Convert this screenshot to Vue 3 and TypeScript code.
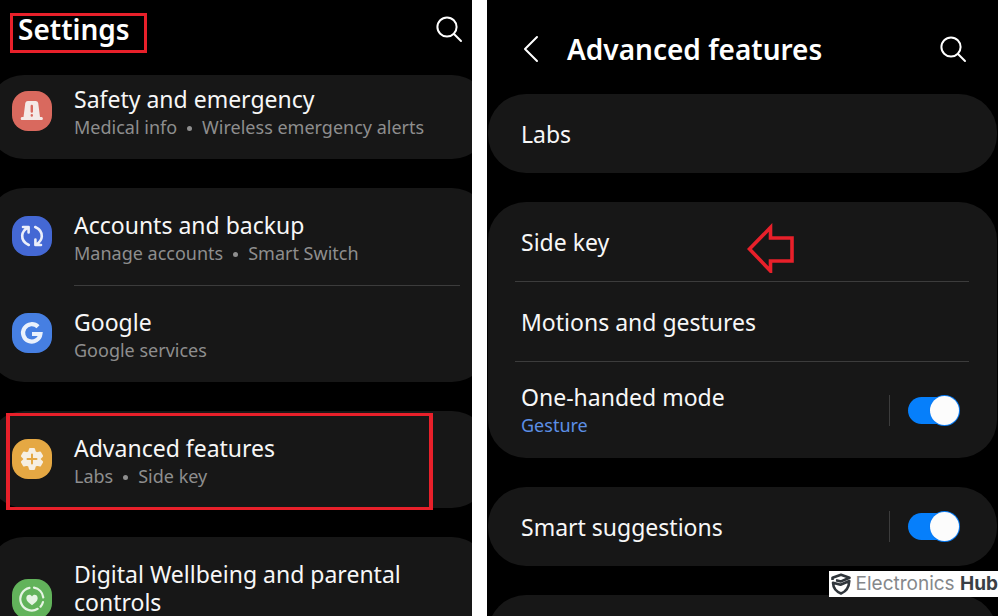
<script setup lang="ts">
import { ref } from 'vue'

type IconName = 'alarm' | 'sync' | 'google' | 'gear' | 'wellbeing'

interface SettingsItem {
  title: string
  details: string[]
  icon: IconName
}

interface SettingsGroup {
  items: SettingsItem[]
  highlighted?: boolean
  tight?: boolean
}

const groups: SettingsGroup[] = [
  {
    tight: true,
    items: [{ title: 'Safety and emergency', details: ['Medical info', 'Wireless emergency alerts'], icon: 'alarm' }],
  },
  {
    items: [
      { title: 'Accounts and backup', details: ['Manage accounts', 'Smart Switch'], icon: 'sync' },
      { title: 'Google', details: ['Google services'], icon: 'google' },
    ],
  },
  {
    highlighted: true,
    items: [{ title: 'Advanced features', details: ['Labs', 'Side key'], icon: 'gear' }],
  },
  {
    items: [{ title: 'Digital Wellbeing and parental controls', details: [], icon: 'wellbeing' }],
  },
]

const oneHanded = ref(true)
const smartSuggestions = ref(true)
</script>

<template>
  <div class="page">
    <section class="panel panel-settings">
      <header class="head head-settings">
        <h1 class="heading boxed">Settings</h1>
        <button class="icon-button" type="button" aria-label="Search settings">
          <svg width="28" height="28" viewBox="0 0 28 28" fill="none" stroke="#fff" stroke-width="2" stroke-linecap="round">
            <circle cx="12" cy="12" r="9.6" />
            <path d="M19 19 26 26" />
          </svg>
        </button>
      </header>

      <div class="groups">
        <div v-for="(group, g) in groups" :key="g" class="group" :class="{ tight: group.tight }">
          <a v-for="item in group.items" :key="item.title" class="item" href="#">
            <span class="badge" :class="item.icon">
              <svg v-if="item.icon === 'alarm'" width="40" height="40" viewBox="0 0 40 40">
                <path fill="#f4e9e7" d="M15.800 10h7.900a2.600 2.600 0 0 1 2.500 2L28 26h1.700q1.200 0 1.200 1.500T29.700 29H9.900q-1.200 0-1.200-1.500T9.900 26h1.600l1.800-14a2.600 2.600 0 0 1 2.500-2z" />
                <path stroke="#d9695e" stroke-width="2.400" stroke-linecap="round" d="M19.800 15v5.500M19.800 24.300v.2" />
              </svg>
              <svg v-else-if="item.icon === 'sync'" width="40" height="40" viewBox="0 0 40 40" fill="none" stroke="#eceffa" stroke-width="2.600" stroke-linecap="round" stroke-linejoin="round">
                <path d="M16.800 29C12.500 27 10 23.500 10.200 19.500 10.400 16 12.500 13.500 15.800 11.600M11 11h5.600v5.500" />
                <path d="M23.200 11C27.500 13 30 16.500 29.800 20.500 29.600 24 27.500 26.500 24.200 28.600M29 29h-5.600v-5.500" />
              </svg>
              <svg v-else-if="item.icon === 'google'" width="40" height="40" viewBox="0 0 40 40" fill="none" stroke="#eaf1fc" stroke-width="4.200">
                <path d="M26 13.800A8.700 8.700 0 1 0 28.400 21H20" />
              </svg>
              <svg v-else-if="item.icon === 'gear'" width="40" height="40" viewBox="0 0 40 40">
                <path fill="#f6efe2" stroke="#f6efe2" stroke-width="2" stroke-linejoin="round" d="M18 10h4l.9 3 2.200 1.300 3-.8 2 3.500-2.200 2.200v1.600l2.200 2.200-2 3.500-3-.8-2.200 1.300-.9 3h-4l-.9-3-2.200-1.300-3 .8-2-3.500 2.200-2.200v-1.600L9.900 17l2-3.500 3 .8 2.200-1.300z" />
                <path stroke="#e5a843" stroke-width="2" stroke-linecap="round" d="M20 15.500v9M15.500 20h9" />
              </svg>
              <svg v-else width="40" height="40" viewBox="0 0 40 40" fill="none" stroke="#e6f4e4" stroke-width="2.200" stroke-linecap="round">
                <path d="M22 8.700A11.400 11.400 0 0 1 31.300 18.500M31 23A11.400 11.400 0 0 1 28.500 27.700M25.700 29.800A11.400 11.400 0 1 1 17.500 8.900" />
                <path fill="#e6f4e4" stroke="none" d="M20 26.200c-3-2.200-5.700-4.300-5.700-7 0-3.700 4.300-4.500 5.700-1.700 1.400-2.800 5.700-2 5.700 1.700 0 2.700-2.700 4.800-5.700 7z" />
              </svg>
            </span>
            <span class="text">
              <span class="title">{{ item.title }}</span>
              <span class="details">
                <template v-for="(detail, d) in item.details" :key="detail">
                  <i v-if="d > 0" class="dot" />
                  <span>{{ detail }}</span>
                </template>
              </span>
            </span>
          </a>
          <span v-if="group.highlighted" class="highlight" />
        </div>
      </div>
    </section>

    <section class="panel panel-features">
      <header class="head head-features">
        <button class="icon-button" type="button" aria-label="Back">
          <svg width="18" height="28" viewBox="0 0 18 28" fill="none" stroke="#fff" stroke-width="2" stroke-linecap="round" stroke-linejoin="round">
            <path d="M15 2 3 14 15 26" />
          </svg>
        </button>
        <h2 class="heading">Advanced features</h2>
        <button class="icon-button" type="button" aria-label="Search advanced features">
          <svg width="28" height="28" viewBox="0 0 28 28" fill="none" stroke="#fff" stroke-width="2" stroke-linecap="round">
            <circle cx="12" cy="12" r="9.600" />
            <path d="M19 19 26 26" />
          </svg>
        </button>
      </header>

      <div class="cards">
        <div class="card">
          <a class="row" href="#"><span class="title">Labs</span></a>
        </div>
        <div class="card">
          <a class="row" href="#">
            <span class="title">Side key</span>
            <svg class="pointer" width="48" height="50" viewBox="0 0 48 50" fill="none" stroke="#e8202a" stroke-width="3.600">
              <path d="M2.500 26 23.500 4.500V15H45V38H23.500V48z" />
            </svg>
          </a>
          <a class="row" href="#"><span class="title">Motions and gestures</span></a>
          <div class="row tall">
            <label class="text" for="one-handed">
              <span class="title">One-handed mode</span>
              <span class="details accent">Gesture</span>
            </label>
            <span class="switch-area"><input id="one-handed" v-model="oneHanded" class="switch" type="checkbox" role="switch" /></span>
          </div>
        </div>
        <div class="card">
          <div class="row">
            <label class="title" for="smart">Smart suggestions</label>
            <span class="switch-area"><input id="smart" v-model="smartSuggestions" class="switch" type="checkbox" role="switch" /></span>
          </div>
        </div>
        <div class="card"><div class="row" /></div>
      </div>
    </section>

    <div class="brand">
      <svg width="20" height="22" viewBox="0 0 20 22" fill="none" stroke="#30363c" stroke-width="2.600" stroke-linejoin="round">
        <path d="M1.500 7V4.800L10 1.700 18.500 4.800 10 8.400 5 7.200" />
        <path d="M18.300 8 9.500 11.800 2 9.800C2.200 15 5 18.500 10 20.500 15 18.500 18 15 18.300 8z" />
      </svg>
      <span class="brand-name">Electronics <b>Hub</b></span>
    </div>
  </div>
</template>

<style>
body {
  margin: 0;
  background: #fff;
}
</style>

<style scoped>
.page {
  position: relative;
  display: grid;
  grid-template-columns: 472fr 511fr;
  column-gap: 15px;
  height: 100vh;
  padding-right: 2px;
  box-sizing: border-box;
  overflow: hidden;
  font-family: 'Noto Sans', 'Open Sans', sans-serif;
  color: #f7f7f7;
}
.panel {
  min-width: 0;
  overflow: hidden;
  background: #000;
}
.head {
  display: flex;
  box-sizing: border-box;
}
.head-settings {
  height: 75px;
  align-items: flex-start;
  justify-content: space-between;
  padding: 13px 9px 0 10px;
}
.head-features {
  height: 94px;
  align-items: center;
  padding: 4px 31px 0 35px;
}
.head-features .heading {
  flex: 1;
  margin-left: 27px;
}
.heading {
  margin: 0;
  font-size: 28px;
  line-height: 34px;
  font-weight: 600;
  color: #fff;
}
.boxed {
  padding: 0 14px 8px 5px;
  border: 3px solid #e8202a;
  line-height: 26px;
}
.icon-button {
  display: flex;
  padding: 0;
  border: 0;
  background: none;
  cursor: pointer;
}
.head-settings .icon-button {
  margin-top: 2px;
}
.groups {
  display: flex;
  flex-direction: column;
  gap: 29px;
  margin: 0 -16px 0 -12px;
}
.group {
  position: relative;
  padding: 0 28px 0 24px;
  border-radius: 36px;
  background: #171717;
}
.item {
  display: flex;
  align-items: center;
  gap: 22px;
  color: inherit;
  text-decoration: none;
}
.item .text {
  flex: 1;
  padding: 23px 0 20px;
}
.tight .item .text {
  padding-top: 10px;
}
.tight .badge {
  margin-top: -12px;
}
.item + .item .text {
  padding-top: 22px;
  border-top: 1px solid #3c3c3c;
}
.text {
  display: flex;
  flex-direction: column;
  gap: 2px;
}
.title {
  font-size: 23px;
  line-height: 28px;
}
.details {
  display: flex;
  align-items: center;
  min-height: 24px;
  font-size: 18px;
  line-height: 24px;
  color: #8e8e8e;
}
.accent {
  color: #5c8fe6;
}
.dot {
  width: 5px;
  height: 5px;
  margin: 2px 10px 0;
  border-radius: 50%;
  background: #8e8e8e;
}
.badge {
  display: flex;
  flex: none;
  width: 40px;
  height: 40px;
  margin-top: -1px;
  border-radius: 16px;
}
.alarm {
  background: #d9695e;
}
.sync {
  background: #4468d4;
}
.google {
  background: #467fe2;
}
.gear {
  background: #e5a843;
}
.wellbeing {
  background: #62b35b;
}
.highlight {
  position: absolute;
  inset: 2px 55px -2px 18px;
  border: 4px solid #e8202a;
  border-width: 3px 4px;
  pointer-events: none;
}
.cards {
  display: flex;
  flex-direction: column;
  gap: 29px;
  margin: 0 1px;
}
.card {
  padding: 0 28px 0 27px;
  border-radius: 38px;
  background: #171717;
}
.row {
  position: relative;
  display: flex;
  align-items: center;
  justify-content: space-between;
  min-height: 79px;
  padding: 0 10px 0 6px;
  color: inherit;
  text-decoration: none;
}
.row + .row {
  border-top: 1px solid #3c3c3c;
}
.tall {
  min-height: 96px;
}
.pointer {
  position: absolute;
  left: 51%;
  top: 21px;
}
.switch-area {
  display: flex;
  align-items: center;
  height: 31px;
  padding-left: 18px;
  border-left: 1px solid #3c3c3c;
}
.switch {
  display: flex;
  align-items: center;
  appearance: none;
  width: 51px;
  height: 27px;
  margin: 0;
  border-radius: 14px;
  background: #5a5a5a;
  cursor: pointer;
}
.switch::before {
  content: '';
  width: 29px;
  height: 29px;
  flex: none;
  border-radius: 50%;
  background: #fcfcfc;
  box-shadow: 0 0 0 1px #0a7cf5;
}
.switch:checked {
  justify-content: flex-end;
  background: #067ffb;
}
.brand {
  position: absolute;
  right: 2px;
  bottom: 19px;
  display: flex;
  align-items: center;
  gap: 5px;
  height: 26px;
  padding: 0 0 0 2px;
  background: #fff;
  color: #85888b;
}
.brand-name {
  font-family: Inter, sans-serif;
  font-size: 19px;
  line-height: 26px;
  white-space: nowrap;
}
.brand b {
  color: #3a3f45;
}
</style>
